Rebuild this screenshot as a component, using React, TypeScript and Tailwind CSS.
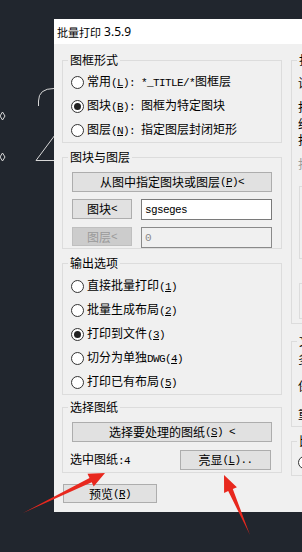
import React from "react";

const ASCII = "font-['Liberation_Mono',monospace] text-[11px] tracking-[-0.6px]";

function Lbl({ t }: { t: string }) {
  const parts: { s: string; a: boolean; u: boolean }[] = [];
  let u = false;
  for (const ch of t) {
    if (ch === "&") {
      u = true;
      continue;
    }
    const a = ch.charCodeAt(0) < 128;
    const last = parts[parts.length - 1];
    if (last && last.a === a && !u && !last.u) last.s += ch;
    else parts.push({ s: ch, a, u });
    u = false;
  }
  return (
    <>
      {parts.map((p, i) => (
        <span
          key={i}
          className={
            (p.a ? ASCII : "") + (p.u ? " underline underline-offset-[1px]" : "")
          }
        >
          {p.s}
        </span>
      ))}
    </>
  );
}

function Radio({ checked }: { checked?: boolean }) {
  return (
    <span className="w-[13px] h-[13px] rounded-full border border-[#333333] bg-white flex items-center justify-center shrink-0">
      {checked && <span className="w-[7px] h-[7px] rounded-full bg-[#222222]" />}
    </span>
  );
}

function Group({
  label,
  className,
  children,
}: {
  label: string;
  className?: string;
  children?: React.ReactNode;
}) {
  return (
    <div className={"border border-[#dcdcdc] flex flex-col " + (className ?? "")}>
      <div className="-mt-[9px] ml-[5px] w-fit px-[2px] bg-[#f0f0f0] leading-[16px]">
        <Lbl t={label} />
      </div>
      {children}
    </div>
  );
}

function RadioRow({ t, checked }: { t: string; checked?: boolean }) {
  return (
    <div className="h-[24px] flex items-center pl-[8px] gap-[3px] whitespace-nowrap">
      <Radio checked={checked} />
      <span>
        <Lbl t={t} />
      </span>
    </div>
  );
}

function Btn({
  t,
  className,
  disabled,
}: {
  t: string;
  className?: string;
  disabled?: boolean;
}) {
  return (
    <div
      className={
        "flex items-center justify-center whitespace-nowrap border " +
        (disabled
          ? "bg-[#cccccc] border-[#bfbfbf] text-[#9a9a9a] "
          : "bg-[#e1e1e1] border-[#adadad] text-black ") +
        (className ?? "")
      }
    >
      <Lbl t={t} />
    </div>
  );
}

export default function App() {
  return (
    <div className="relative w-[302px] h-[552px] overflow-hidden bg-[#21262e] font-['Noto_Sans_CJK_SC',sans-serif] text-[12px] leading-[16px] text-black">
      {/* CAD canvas drawings */}
      <svg className="absolute left-0 top-0" width="302" height="552">
        <g fill="none" stroke="#d8d8d8" strokeWidth="1">
          <path d="M0 116 L2.5 112 L5 116 L2.5 120 Z" />
          <path d="M0 157 L2.5 153 L5 157 L2.5 161 Z" />
          <path d="M38.5 106 V101 Q38.5 88.5 54 88.5" />
          <path d="M36 160.5 H55" />
          <path d="M36 160.5 L55 135" />
        </g>
      </svg>

      {/* Dialog window */}
      <div className="absolute left-[54px] top-[19px] w-[400px] h-[493px] bg-[#f0f0f0] flex flex-col">
        <div className="h-[25px] bg-white flex items-center pl-[3px] whitespace-nowrap">
          <span className="text-[11px]">批量打印</span>
          <span className="text-[12px] font-['Noto_Sans',sans-serif]">&nbsp;3.5.9</span>
        </div>

        <div className="flex pt-[16px] pl-[8px] gap-[9px]">
          {/* Left column */}
          <div className="w-[220px] flex flex-col shrink-0">
            <Group label="图框形式">
              <div className="mt-[2px] flex flex-col">
                <RadioRow t="常用(&L): *_TITLE/*图框层" />
                <RadioRow t="图块(&B): 图框为特定图块" checked />
                <RadioRow t="图层(&N): 指定图层封闭矩形" />
              </div>
            </Group>

            <Group label="图块与图层" className="mt-[14px]">
              <div className="px-[9px] flex flex-col">
                <Btn t="从图中指定图块或图层(&P)<" className="mt-[7px] h-[20px]" />
                <div className="mt-[7px] h-[21px] flex items-start gap-[9px]">
                  <Btn t="图块<" className="w-[60px] h-[20px]" />
                  <div className="flex-1 h-[21px] bg-white border border-[#7a7a7a] flex items-center pl-[3px]">
                    <span className={ASCII}>sgseges</span>
                  </div>
                </div>
                <div className="mt-[7px] h-[21px] flex items-start gap-[9px]">
                  <Btn t="图层<" className="w-[60px] h-[19px]" disabled />
                  <div className="flex-1 h-[21px] bg-[#f0f0f0] border border-[#8a8a8a] flex items-center pl-[3px] text-[#8a8a8a]">
                    <span className={ASCII}>0</span>
                  </div>
                </div>
              </div>
            </Group>

            <Group label="输出选项" className="mt-[14px]">
              <div className="mt-[3px] flex flex-col">
                <RadioRow t="直接批量打印(&1)" />
                <RadioRow t="批量生成布局(&2)" />
                <RadioRow t="打印到文件(&3)" checked />
                <RadioRow t="切分为单独DWG(&4)" />
                <RadioRow t="打印已有布局(&5)" />
              </div>
            </Group>

            <Group label="选择图纸" className="mt-[12px]">
              <div className="px-[9px] flex flex-col">
                <Btn t="选择要处理的图纸(&S) <" className="mt-[7px] h-[20px]" />
              </div>
              <div className="mt-[8px] h-[20px] flex items-center justify-between pl-[7px] pr-[10px]">
                <span className="whitespace-nowrap">
                  <Lbl t="选中图纸:4" />
                </span>
                <Btn t="亮显(&L).." className="w-[91px] h-[20px]" />
              </div>
              <div className="h-[2px]" />
            </Group>

            <Btn t="预览(&R)" className="mt-[11px] ml-[1px] w-[94px] h-[19px]" />
          </div>

          {/* Right column (mostly clipped) */}
          <div className="w-[150px] flex flex-col shrink-0">
            <Group label="打印设置">
              <div className="pl-[6px] flex flex-col whitespace-nowrap">
                <div className="mt-[7px]">设备名称</div>
                <div className="mt-[8px] leading-[16.5px]">打印样式表</div>
                <div className="leading-[16.5px]">纸张大小</div>
                <div className="leading-[16.5px]">打印区域</div>
                <div className="mt-[7px] text-[#9a9a9a]">打印偏移</div>
                <div className="mt-[14px] ml-[1px] h-[73px] w-[120px] border border-[#dcdcdc]" />
                <div className="mt-[24px] ml-[1px] h-[36px] w-[120px] border border-[#dcdcdc]" />
                <div className="h-[4px]" />
              </div>
            </Group>

            <Group label="文件输出" className="mt-[17px]">
              <div className="pl-[6px] flex flex-col whitespace-nowrap">
                <div className="mt-[2px]">多文件</div>
                <div className="mt-[11px]">保存位置</div>
                <div className="mt-[12px]">重命名</div>
                <div className="h-[4px]" />
              </div>
            </Group>

            <Group label="比例" className="mt-[14px]">
              <div className="mt-[6px] pl-[6px] flex items-center gap-[3px] h-[16px]">
                <Radio />
                <span>布满图纸</span>
              </div>
              <div className="h-[4px]" />
            </Group>
          </div>
        </div>
      </div>

      {/* Red arrows */}
      <svg className="absolute left-0 top-0 pointer-events-none" width="302" height="552">
        <polygon
          fill="#e8281e"
          points="23,513 89.5,477.9 87.5,473.8 105,473 93.7,486.4 91.7,482.3"
        />
        <polygon
          fill="#e8281e"
          points="250,535 228.2,491.1 224.1,492.9 224,475 236.9,487.3 232.8,489.1"
        />
      </svg>
    </div>
  );
}
